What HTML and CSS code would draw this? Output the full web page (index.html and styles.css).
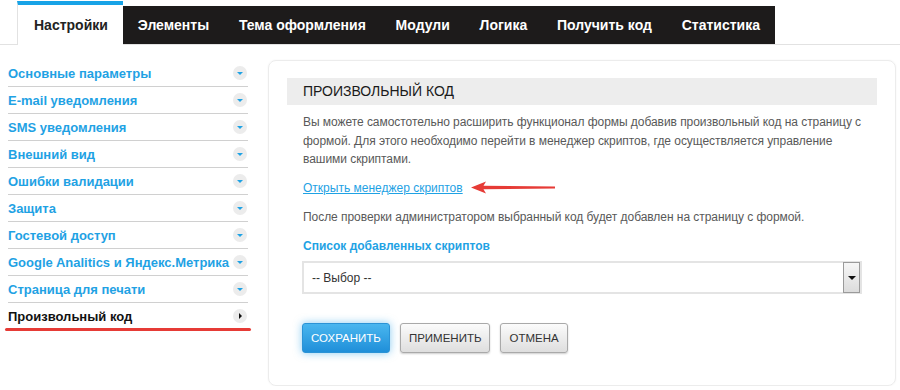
FILE: index.html
```html
<!DOCTYPE html>
<html>
	<head>
		<meta charset="utf-8" />
		<title>Настройки формы</title>
		<link rel="stylesheet" href="styles.css">
	</head>
	<body>
		<div id="tabs">
			<a class="tab active" href="#">Настройки</a>
			<div id="tabbar">
				<a class="tab" href="#">Элементы</a>
				<a class="tab" href="#">Тема оформления</a>
				<a class="tab" href="#">Модули</a>
				<a class="tab" href="#">Логика</a>
				<a class="tab" href="#">Получить код</a>
				<a class="tab" href="#">Статистика</a>
			</div>
		</div>
		<div id="page">
			<ul id="menu">
				<li><a href="#">Основные параметры</a><i class="toggle"></i></li>
				<li><a href="#">E-mail уведомления</a><i class="toggle"></i></li>
				<li><a href="#">SMS уведомления</a><i class="toggle"></i></li>
				<li><a href="#">Внешний вид</a><i class="toggle"></i></li>
				<li><a href="#">Ошибки валидации</a><i class="toggle"></i></li>
				<li><a href="#">Защита</a><i class="toggle"></i></li>
				<li><a href="#">Гостевой доступ</a><i class="toggle"></i></li>
				<li><a href="#">Google Analitics и Яндекс.Метрика</a><i class="toggle"></i></li>
				<li><a href="#">Страница для печати</a><i class="toggle"></i></li>
				<li class="current"><a href="#">Произвольный код</a><i class="toggle"></i></li>
			</ul>
			<div id="panel">
				<h2 class="caption">Произвольный код</h2>
				<div class="body">
					<p class="note">Вы можете самостотельно расширить функционал формы добавив произвольный код на страницу с<br />формой. Для этого необходимо перейти в менеджер скриптов, где осуществляется управление<br />вашими скриптами.</p>
					<p class="link">
						<a href="#">Открыть менеджер скриптов</a>
						<svg class="pointer" width="84" height="13" viewBox="0 0 84 13"><path d="M0 6.5 L15 0.5 L12.5 4.8 L84 5.6 L84 7.4 L12.5 8.2 L15 12.5 Z" fill="#e63b36" /></svg>
					</p>
					<p class="note">После проверки администратором выбранный код будет добавлен на страницу с формой.</p>
					<label class="label">Список добавленных скриптов</label>
					<div class="select">
						<span>-- Выбор --</span>
						<i class="drop"></i>
					</div>
					<div class="buttons">
						<button class="btn primary">Сохранить</button>
						<button class="btn">Применить</button>
						<button class="btn">Отмена</button>
					</div>
				</div>
			</div>
		</div>
	</body>
</html>
```

FILE: styles.css
```css
body {
	margin: 0; padding: 0;
	background-color: #fff;
	font: 12px "Liberation Sans", Arial, sans-serif;
	color: #555;
}
a { text-decoration: none; }
#tabs {
	display: flex; align-items: flex-end;
	height: 44px; padding: 0 0 0 17px;
	border-bottom: 1px solid #e2e2e2;
}
#tabbar {
	display: flex;
	height: 38px;
	background-color: #1d1b1b;
}
.tab {
	display: block;
	padding: 0 14.9px;
	line-height: 38px;
	font-size: 14px; font-weight: bold;
	color: #fff;
}
.tab.active {
	height: 40px; line-height: 40px; margin-bottom: -1px;
	padding: 0 15px 0 16px;
	border-top: 4px solid #17a3e7; border-left: 1px solid #e2e2e2;
	background-color: #fff;
	color: #222;
}
#page {
	display: flex; align-items: flex-start;
	gap: 20px;
	padding: 15px 4px 0 8px;
}
#menu {
	width: 240px; margin: 0; padding: 0;
	list-style: none;
}
#menu li {
	position: relative;
	display: flex; align-items: center; justify-content: space-between;
	height: 26px;
	border-bottom: 1px solid #d0d0d0;
}
#menu li a {
	font-size: 13px; font-weight: bold;
	color: #1fa2e4;
	white-space: nowrap;
}
#menu li.current a { color: #111; }
#menu li.current::after {
	content: '';
	position: absolute; left: -3px; right: -3px; bottom: -2px;
	height: 3px;
	border-radius: 2px;
	background: #e63b36;
}
.toggle {
	position: relative;
	width: 14px; height: 14px; margin-right: 1px;
	border-radius: 50%;
	background: #ececec;
}
.toggle::after {
	content: '';
	position: absolute; left: 4px; top: 6px;
	border-left: 3px solid transparent; border-right: 3px solid transparent; border-top: 3px solid #1fa2e4;
}
.current .toggle::after {
	left: 6px; top: 4px;
	border-top: 3px solid transparent; border-bottom: 3px solid transparent; border-left: 3px solid #111; border-right: none;
}
#panel {
	flex: 1;
	height: 307px; padding: 17px 18px 0 18px;
	border: 1px solid #ececec; border-radius: 8px;
	box-shadow: 0 0 2px rgba(0,0,0,0.06);
}
.caption {
	margin: 0; padding: 0 16px;
	height: 27px; line-height: 27px;
	background-color: #ededed;
	font-size: 14px; font-weight: normal;
	color: #1a1a1a;
	text-transform: uppercase;
}
.body {
	padding: 8px 15px 0 16px;
}
.note {
	margin: 0 0 10px 0;
	line-height: 18.5px;
	color: #595959;
	white-space: nowrap;
	letter-spacing: -0.05px;
}
.link {
	display: flex; align-items: center;
	gap: 8px;
	margin: 0 0 11px 0;
	height: 18px;
}
.link a {
	color: #1fa2e4;
	text-decoration: underline;
}
.label {
	display: block;
	margin: 13px 0 8px 0;
	font-weight: bold;
	color: #1fa2e4;
}
.select {
	display: flex; align-items: center; justify-content: space-between;
	height: 29px; margin-left: -1px;
	border: 2px solid #e4e4e4;
	color: #333;
}
.select span { padding-left: 8px; }
.drop {
	position: relative;
	width: 15px; height: 29px;
	border: 1px solid #9a9a9a;
	background: linear-gradient(#f6f6f6, #dcdcdc);
}
.drop::after {
	content: '';
	position: absolute; left: 4px; top: 13px;
	border-left: 4px solid transparent; border-right: 4px solid transparent; border-top: 4px solid #111;
}
.buttons {
	display: flex;
	gap: 10px;
	margin: 29px 0 0 -1px;
}
.btn {
	height: 30px; padding: 0 8px;
	border: 1px solid #a9a9a9; border-radius: 3px;
	background: linear-gradient(#fbfbfb, #dedede);
	box-shadow: 0 1px 2px rgba(0,0,0,0.2);
	font: 11.5px "Liberation Sans", Arial, sans-serif;
	color: #333;
	text-transform: uppercase;
}
.btn.primary {
	border-color: #2b93d6;
	background: linear-gradient(#49b6ef, #1f8fd9);
	box-shadow: 0 0 8px rgba(40,160,230,0.55);
	color: #fff;
}
```
